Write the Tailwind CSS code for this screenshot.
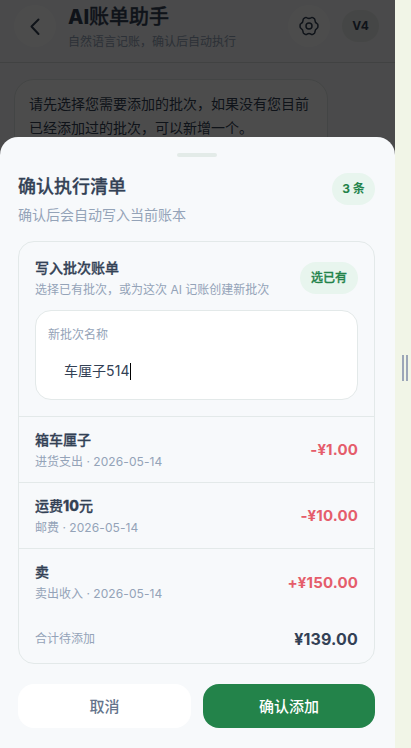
<!DOCTYPE html>
<html lang="zh-CN">
<head>
<meta charset="utf-8">
<meta name="viewport" content="width=device-width, initial-scale=1">
<title>AI账单助手</title>
<script src="https://cdn.jsdelivr.net/npm/@tailwindcss/browser@4"></script>
</head>
<body class="flex h-[748px] w-[411px] overflow-hidden bg-[#f1f5e7] font-['Inter','Noto_Sans_CJK_SC',sans-serif] whitespace-nowrap text-[#334155]">
<div class="relative h-[748px] w-[395px] shrink-0 overflow-hidden bg-[#f7f8fa]">
  <!-- Chat page -->
  <header class="flex h-[63px] items-start border-b border-[#d9dddd] pl-[14px] pr-4">
    <div class="mt-[5px] flex size-[42px] items-center justify-center rounded-full bg-white">
      <svg class="size-6" viewBox="0 0 24 24" fill="none" stroke="#334155" stroke-width="2" stroke-linecap="round" stroke-linejoin="round"><path d="M15.500 5.500 8.500 12.500l7 7.500"/></svg>
    </div>
    <div class="ml-3 flex-1">
      <h1 class="mt-[3px] text-[20px] leading-7"><b class="font-extrabold">AI</b><span class="font-medium [-webkit-text-stroke:0.3px_#334155]">账单助手</span></h1>
      <p class="mt-[2px] text-[12px] leading-[18px] text-[#94a3b8]">自然语言记账，确认后自动执行</p>
    </div>
    <div class="mt-[5px] flex size-[42px] items-center justify-center rounded-full bg-white">
      <svg class="size-[22px]" viewBox="0 0 22 22" fill="none" stroke="#334155" stroke-width="1.500" stroke-linejoin="round"><path d="M7.200 2.700Q8.200 2.100 9 2.800Q11 4 13 2.800Q13.800 2.100 14.800 2.700L16.300 3.600Q17 4.100 16.900 5.100Q17 7.500 19 8.700Q19.900 9.200 19.900 10V12Q19.900 12.800 19 13.300Q17 14.500 16.900 16.900Q17 17.900 16.300 18.400L14.800 19.300Q13.800 19.900 13 19.200Q11 18 9 19.200Q8.200 19.900 7.200 19.300L5.700 18.400Q5 17.900 5.100 16.900Q5 14.500 3 13.300Q2.100 12.800 2.100 12V10Q2.100 9.200 3 8.700Q5 7.500 5.100 5.100Q5 4.100 5.700 3.600Z"/><circle cx="11" cy="11" r="3"/></svg>
    </div>
    <div class="mt-[10px] ml-3 flex h-8 w-[37px] items-center justify-center rounded-full bg-[#e8ebe9] text-[12px] font-bold">V4</div>
  </header>
  <div class="mt-4 ml-[14px] h-24 w-[314px] rounded-[20px] border border-[#e2e8e6] bg-white px-[14px] py-3 text-[14px] leading-6">
    请先选择您需要添加的批次，如果没有您目前<br>已经添加过的批次，可以新增一个。
  </div>
  <div class="absolute inset-0 bg-black/70"></div>

  <!-- Confirmation sheet -->
  <section class="absolute inset-x-0 top-[137px] bottom-0 rounded-t-[18px] bg-[#f7f9fb] px-[18px] pr-5 pt-4">
    <div class="mx-auto h-1 w-10 rounded-full bg-[#e3ebe8]"></div>
    <div class="mt-4 flex justify-between">
      <div>
        <h2 class="text-[18px] leading-7 font-medium [-webkit-text-stroke:0.3px_#334155]">确认执行清单</h2>
        <p class="mt-[3px] text-[14px] leading-[22px] text-[#94a3b8]">确认后会自动写入当前账本</p>
      </div>
      <span class="flex h-8 w-[43px] items-center justify-center rounded-full bg-[#e8f5ee] text-[12px] font-bold text-[#23834a]">3 条</span>
    </div>
    <div class="mt-[15px] h-[423px] rounded-2xl border border-[#e3e9e9]">
      <div class="h-[175px] border-b border-[#e3e9e9] p-4">
        <div class="flex h-10 items-center justify-between">
          <div>
            <h3 class="text-[14px] leading-[22px] font-medium [-webkit-text-stroke:0.3px_#334155]">写入批次账单</h3>
            <p class="mt-[2px] text-[12px] leading-[18px] text-[#94a3b8]">选择已有批次，或为这次 AI 记账创建新批次</p>
          </div>
          <span class="flex h-8 w-[58px] items-center justify-center rounded-full bg-[#e8f5ee] text-[12px] font-medium text-[#23834a] [-webkit-text-stroke:0.3px_#23834a]">选已有</span>
        </div>
        <div class="mt-3 h-[90px] rounded-2xl border border-[#e3e9e9] bg-white px-3 pt-[15px]">
          <p class="text-[12px] leading-[18px] text-[#94a3b8]">新批次名称</p>
          <div class="mt-4 ml-4 flex h-[22px] items-center text-[14px] leading-[22px]">车厘子<span class="tracking-[0.15px]">514</span><span class="h-[17px] w-px bg-black"></span></div>
        </div>
      </div>
      <div class="flex h-[66px] items-center justify-between border-b border-[#e3e9e9] px-4">
        <div>
          <h3 class="text-[14px] leading-[22px] font-medium [-webkit-text-stroke:0.3px_#334155]">箱车厘子</h3>
          <p class="mt-[2px] text-[12px] leading-[18px] text-[#94a3b8]">进货支出 · <span class="tracking-[0.1px]">2026-05-14</span></p>
        </div>
        <span class="pt-[2px] text-[15px] font-bold tracking-[0.15px] text-[#e55d6b]">-¥1.00</span>
      </div>
      <div class="flex h-[66px] items-center justify-between border-b border-[#e3e9e9] px-4">
        <div>
          <h3 class="text-[14px] leading-[22px] font-medium [-webkit-text-stroke:0.3px_#334155]">运费<b class="font-extrabold">10</b>元</h3>
          <p class="mt-[2px] text-[12px] leading-[18px] text-[#94a3b8]">邮费 · <span class="tracking-[0.1px]">2026-05-14</span></p>
        </div>
        <span class="pt-[2px] text-[15px] font-bold tracking-[0.15px] text-[#e55d6b]">-¥10.00</span>
      </div>
      <div class="flex h-[66px] items-center justify-between px-4">
        <div>
          <h3 class="text-[14px] leading-[22px] font-medium [-webkit-text-stroke:0.3px_#334155]">卖</h3>
          <p class="mt-[2px] text-[12px] leading-[18px] text-[#94a3b8]">卖出收入 · <span class="tracking-[0.1px]">2026-05-14</span></p>
        </div>
        <span class="pt-[3px] text-[15px] font-bold tracking-[0.15px] text-[#e55d6b]">+¥150.00</span>
      </div>
      <div class="flex h-[48px] items-center justify-between px-4">
        <span class="text-[12px] text-[#94a3b8]">合计待添加</span>
        <span class="text-[16px] font-bold tracking-[0.15px]">¥139.00</span>
      </div>
    </div>
    <div class="mt-5 flex gap-3">
      <button class="h-11 w-[173px] rounded-2xl bg-white pt-[2px] text-[15px] font-medium text-[#64748b]">取消</button>
      <button class="h-11 w-[172px] rounded-2xl bg-[#23834a] pt-[2px] text-[15px] font-medium text-white">确认添加</button>
    </div>
  </section>
</div>
<!-- Resize handle -->
<aside class="flex h-[748px] w-4 items-start gap-[2px] pt-[355px] pl-[7px]">
  <span class="h-[26px] w-[2px] bg-[#9ca6b8]"></span>
  <span class="h-[26px] w-[2px] bg-[#9ca6b8]"></span>
</aside>
</body>
</html>
